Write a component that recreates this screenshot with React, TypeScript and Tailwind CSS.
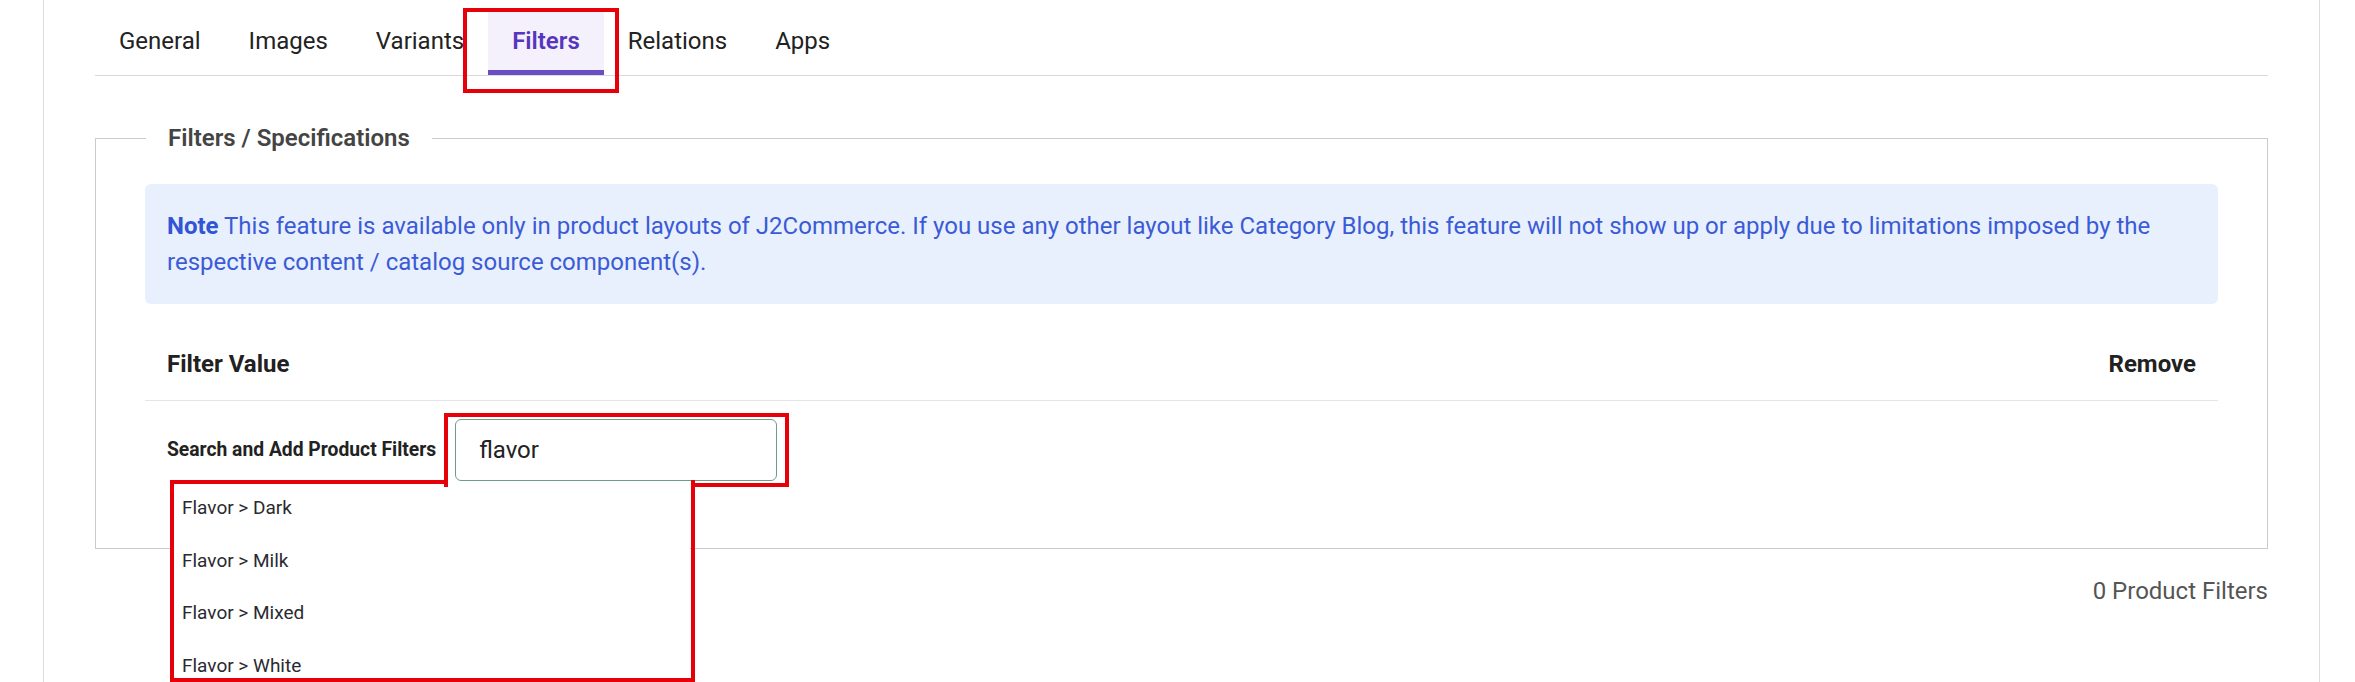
import React from "react";

const tabs = ["General", "Images", "Variants", "Filters", "Relations", "Apps"];
const suggestions = ["Flavor > Dark", "Flavor > Milk", "Flavor > Mixed", "Flavor > White"];

const Tabs = ({ active }: { active: string }) => (
  <nav className="flex border-b border-[#d9d9d9] pt-[12px]">
    {tabs.map((tab) => (
      <a
        key={tab}
        href="#"
        className={
          tab === active
            ? "flex h-[63px] items-center border-b-[5px] border-[#6a4fc4] bg-[#f5f1fc] px-[24px] text-[24px] font-semibold leading-none text-[#5636bd]"
            : "flex h-[63px] items-center border-b-[5px] border-transparent px-[24px] text-[24px] leading-none text-[#222]"
        }
      >
        {tab}
      </a>
    ))}
  </nav>
);

export default function App() {
  return (
    <div className="relative h-[682px] w-full overflow-hidden bg-white font-['Roboto',sans-serif] text-[#212529]">
      <div className="ml-[43px] h-full w-[2277px] border-x border-[#dcdcdc] px-[51px]">
        <Tabs active="Filters" />

        <fieldset className="mt-[44px] border border-[#cbcbcb] px-[49px] pb-[49px]">
          <legend className="ml-[1px] px-[22px] text-[24px] font-semibold leading-[36px] text-[#444]">
            Filters / Specifications
          </legend>

          <div className="mt-[28px] rounded-[6px] bg-[#e8f0fe] px-[22px] py-[24px] text-[24px] leading-[36px] text-[#3b5bd6]">
            <strong className="font-bold text-[#3155d4]">Note</strong> This feature is available only in
            product layouts of J2Commerce. If you use any other layout like Category Blog, this feature will
            not show up or apply due to limitations imposed by the respective content / catalog source
            component(s).
          </div>

          <div className="mt-[24px]">
            <div className="flex h-[73px] items-center justify-between border-b border-[#e6e6e6] px-[22px] text-[24px] font-bold text-[#212121]">
              <span>Filter Value</span>
              <span>Remove</span>
            </div>

            <div className="relative flex items-center gap-[19px] px-[22px] py-[18px]">
              <label className="text-[19.3px] font-bold text-[#222]">Search and Add Product Filters</label>
              <input
                defaultValue="flavor"
                className="h-[62px] w-[322px] rounded-[6px] border border-[#6f9c86] px-[23px] text-[24px] text-[#222] outline-none"
              />

              {/* autocomplete results */}
              <ul className="absolute left-[28px] top-[81px] w-[517px] bg-white">
                {suggestions.map((s) => (
                  <li key={s} className="flex h-[52.5px] items-center pl-[9px] text-[19px] text-[#2a2a30]">
                    {s}
                  </li>
                ))}
              </ul>
            </div>
          </div>
        </fieldset>

        <p className="mt-[24px] text-right text-[24px] leading-[36px] text-[#555]">0 Product Filters</p>
      </div>

      {/* red highlight frames */}
      <div className="pointer-events-none absolute left-[463px] top-[8px] h-[85px] w-[156px] border-4 border-[#e5000a]" />
      <div className="pointer-events-none absolute left-[444px] top-[413px] h-[74px] w-[345px] border-x-4 border-t-4 border-[#e5000a]" />
      <div className="pointer-events-none absolute left-[691px] top-[483px] h-[4px] w-[98px] bg-[#e5000a]" />
      <div className="pointer-events-none absolute left-[170px] top-[480px] h-[202px] w-[525px] border-x-4 border-b-4 border-[#e5000a]" />
      <div className="pointer-events-none absolute left-[170px] top-[480px] h-[4px] w-[278px] bg-[#e5000a]" />
    </div>
  );
}
